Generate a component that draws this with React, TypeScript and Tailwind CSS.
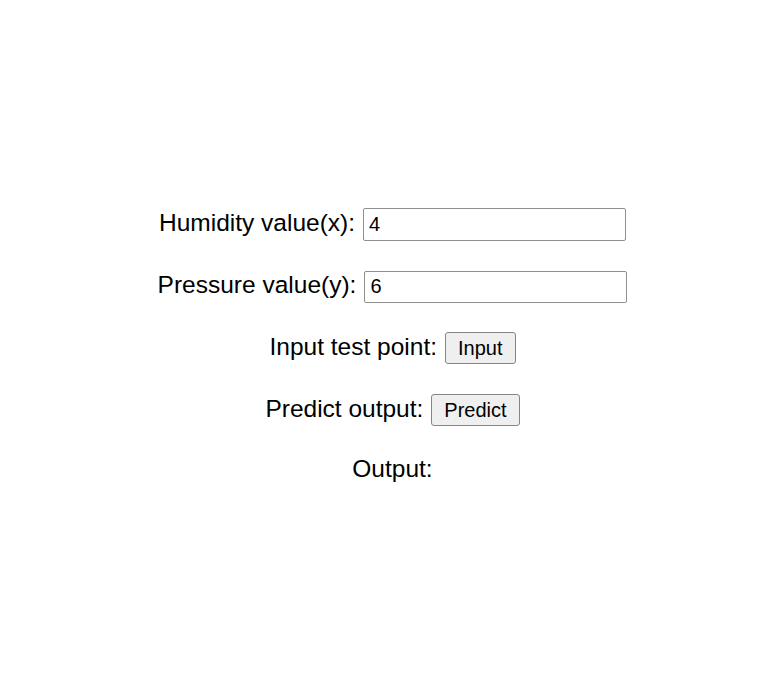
import React from "react";

const Row: React.FC<{ children: React.ReactNode; h?: string }> = ({ children, h = "h-[62px]" }) => (
  <div className={`flex items-baseline justify-center gap-[8px] ${h}`}>{children}</div>
);

const btn =
  "h-[32px] rounded-[3px] border border-[#858585] bg-[#efefef] px-[12px] text-[20px] leading-none text-black";

const field =
  "w-[263px] rounded-[2px] border border-[#8f8f8f] bg-white px-[5px] text-[20px] text-black outline-none";

export default function App() {
  return (
    <div
      className="flex min-h-[680px] w-[780px] flex-col bg-white pl-[5px] pt-[205px] text-[24.5px] text-black"
      style={{ fontFamily: '"Liberation Sans", Arial, sans-serif' }}
    >
      <Row>
        <span>Humidity value(x):</span>
        <input defaultValue="4" className={`h-[33px] ${field}`} />
      </Row>
      <Row>
        <span>Pressure value(y):</span>
        <input defaultValue="6" className={`h-[32px] ${field}`} />
      </Row>
      <Row>
        <span>Input test point:</span>
        <button className={btn}>Input</button>
      </Row>
      <Row h="h-[60px]">
        <span>Predict output:</span>
        <button className={btn}>Predict</button>
      </Row>
      <Row h="h-[40px]">
        <span>Output:</span>
      </Row>
    </div>
  );
}
